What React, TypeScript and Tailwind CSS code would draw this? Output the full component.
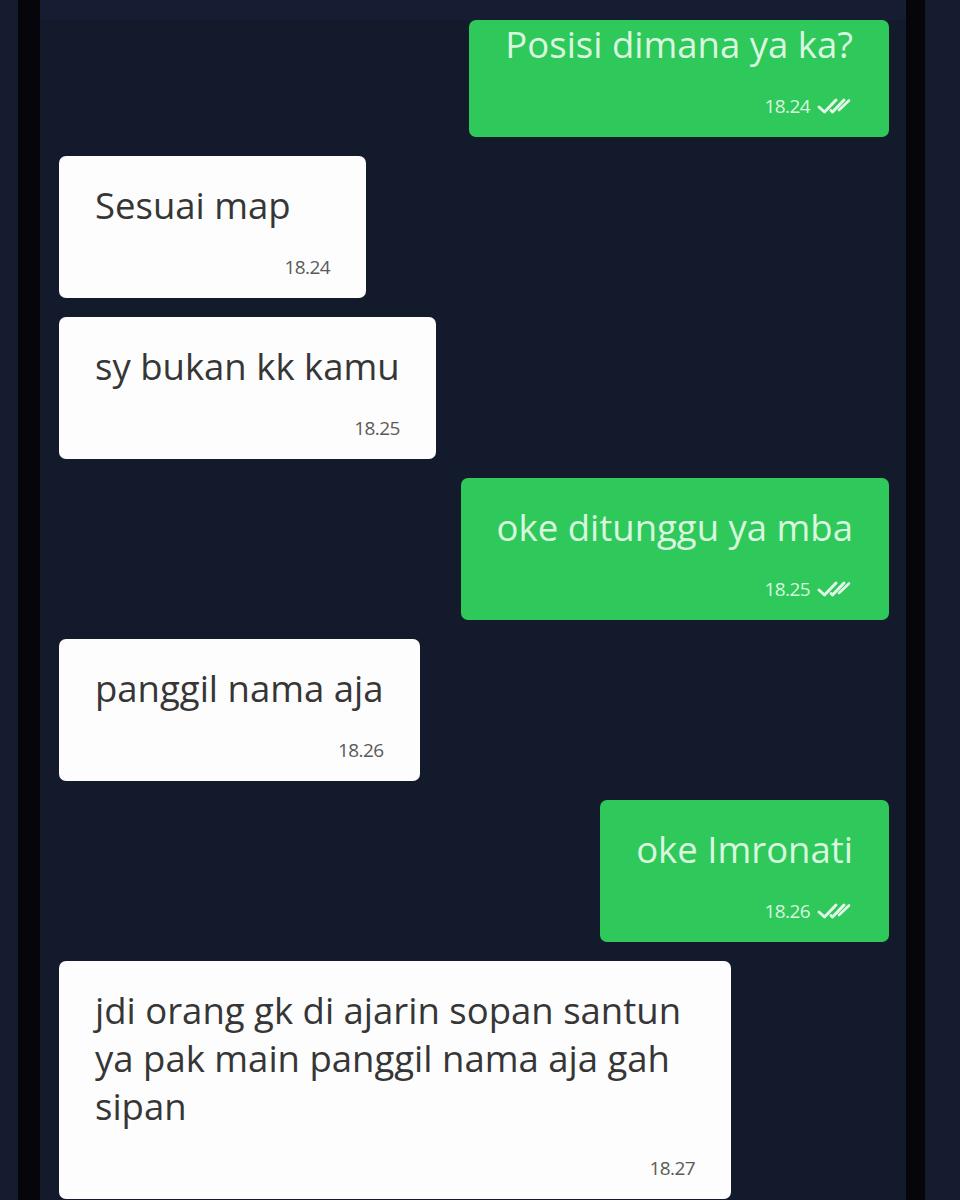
const messages = [
  { text: "Posisi dimana ya ka?", time: "18.24", mine: true, first: true },
  { text: "Sesuai map", time: "18.24", mine: false, wide: true },
  { text: "sy bukan kk kamu", time: "18.25", mine: false },
  { text: "oke ditunggu ya mba", time: "18.25", mine: true },
  { text: "panggil nama aja", time: "18.26", mine: false },
  { text: "oke Imronati", time: "18.26", mine: true },
  {
    text: "jdi orang gk di ajarin sopan santun ya pak main panggil nama aja gah sipan",
    time: "18.27",
    mine: false,
  },
];

// double tick after my own messages
const DoubleCheck = () => (
  <svg width="37" height="18" viewBox="0 0 37 18" fill="none">
    <path
      d="M3 10 L8.5 15 L20 3"
      stroke="#e3f7e7"
      strokeWidth="3"
      strokeLinecap="round"
      strokeLinejoin="round"
    />
    <path
      d="M15 13.5 L16.5 15 L28 3"
      stroke="#e3f7e7"
      strokeWidth="3"
      strokeLinecap="round"
      strokeLinejoin="round"
    />
    <path d="M23 13 L33 3.5" stroke="#e3f7e7" strokeWidth="2.6" strokeLinecap="round" />
  </svg>
);

const Bubble = ({
  text,
  time,
  mine,
  first,
  wide,
}: {
  text: string;
  time: string;
  mine: boolean;
  first?: boolean;
  wide?: boolean;
}) => (
  <div className={`flex ${mine ? "justify-end" : "justify-start"}`}>
    <div
      className={`max-w-[672px] rounded-[7px] pl-[36px] pr-[36px] pb-[21px] ${
        first ? "pt-0" : "pt-[25px]"
      } ${wide ? "min-w-[307px]" : ""} ${mine ? "bg-[#2fc95b]" : "bg-[#fdfdfd]"}`}
    >
      <div
        className={`text-[36.5px] leading-[48px] ${
          mine ? "text-[#d9f7df]" : "text-[#363636]"
        }`}
      >
        {text}
      </div>
      <div className="mt-[28px] flex h-[20px] items-center justify-end gap-[6px]">
        <span
          className={`text-[19px] leading-[20px] tracking-[-0.6px] ${
            mine ? "text-[#d9f7df]" : "text-[#5a5a5a]"
          }`}
        >
          {time}
        </span>
        {mine && <DoubleCheck />}
      </div>
    </div>
  </div>
);

const App = () => {
  return (
    <div
      className="flex h-[1200px] w-[960px] overflow-hidden bg-[#151b2f]"
      style={{ fontFamily: '"Open Sans", "Noto Sans", sans-serif' }}
    >
      <div className="w-[18px] bg-[#161c30]" />
      <div className="w-[22px] bg-[#06060a]" />
      <div className="flex flex-1 flex-col overflow-hidden bg-[#131a2b]">
        <div className="h-[20px] shrink-0 bg-[#161d33]" />
        <div className="flex flex-col gap-[19px] pl-[19px] pr-[17px]">
          {messages.map((m, i) => (
            <Bubble key={i} {...m} />
          ))}
        </div>
      </div>
      <div className="w-[19px] bg-[#06060a]" />
      <div className="w-[35px] bg-[#161c30]" />
    </div>
  );
};

export default App;
